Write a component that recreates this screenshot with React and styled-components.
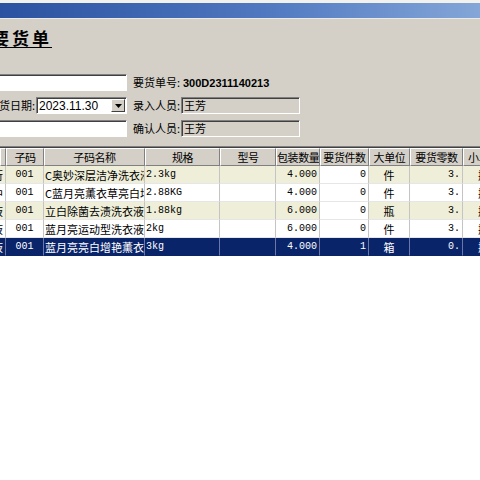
import React from 'react'
import styled, { createGlobalStyle } from 'styled-components'

const GlobalStyle = createGlobalStyle`
  html, body {
    margin: 0;
    padding: 0;
    background: #d4d0c8;
    overflow: hidden;
  }
  body {
    font-family: "Noto Sans CJK SC", "Liberation Sans", sans-serif;
  }
`

const Window = styled.div`
  width: 480px;
  height: 480px;
  display: flex;
  flex-direction: column;
  background: #d4d0c8;
  overflow: hidden;
`

const TitleBar = styled.div`
  height: 15px;
  border-top: 3px solid #f2f1ee;
  border-bottom: 1px solid #ebe9e4;
  background: linear-gradient(to right, #2a52a0, #4f78c0 55%, #84a6d8);
`

const Heading = styled.div`
  margin-top: 10px;
  width: 52px;
  height: 18px;
  display: flex;
  justify-content: flex-end;
  overflow: hidden;
  white-space: nowrap;
  font-size: 17px;
  line-height: 18px;
  font-weight: 700;
  color: #000;
  border-bottom: 1px solid #000;
`

const HeadingText = styled.span`
  flex: none;
  letter-spacing: 3px;
`

const Form = styled.div`
  margin-top: 26px;
  display: grid;
  grid-template-columns: 127px 54px 119px;
  grid-auto-rows: 17px;
  row-gap: 6px;
  align-items: center;
`

const Label = styled.div`
  font-size: 11px;
  line-height: 17px;
  padding-left: 6px;
  color: #000;
  white-space: nowrap;
  overflow: hidden;
`

const Value = styled.div`
  font-family: "Liberation Sans", sans-serif;
  font-weight: 700;
  font-size: 11px;
  margin-left: 2px;
  white-space: nowrap;
`

const Field = styled.div`
  box-sizing: border-box;
  height: 17px;
  background: ${p => (p.$readOnly ? '#d4d0c8' : '#fff')};
  border-style: solid;
  border-width: ${p => (p.$open ? '1px 1px 1px 0' : '1px')};
  border-color: #808080 #fff #fff #808080;
  box-shadow: inset 0 1px #404040, inset ${p => (p.$open ? '0' : '1px')} 0 #404040;
  font-size: 11px;
  line-height: 15px;
  padding-left: 2px;
  color: #000;
  white-space: nowrap;
  overflow: hidden;
`

const DateRow = styled.div`
  display: flex;
  align-items: center;
  gap: 1px;
`

const CutLabel = styled.div`
  width: 35px;
  display: flex;
  justify-content: flex-end;
  overflow: hidden;
  white-space: nowrap;
  font-size: 11px;
  line-height: 17px;
`

const DateBox = styled.div`
  box-sizing: border-box;
  flex: 1;
  height: 17px;
  display: flex;
  align-items: center;
  background: #fff;
  border: 1px solid;
  border-color: #808080 #fff #fff #808080;
  box-shadow: inset 1px 1px #404040;
`

const DateText = styled.div`
  flex: 1;
  padding-left: 2px;
  font-family: "Liberation Sans", sans-serif;
  font-size: 12px;
`

const DropButton = styled.div`
  width: 14px;
  height: 13px;
  margin-right: 1px;
  box-sizing: border-box;
  display: flex;
  align-items: center;
  justify-content: center;
  background: #d4d0c8;
  border: 1px solid;
  border-color: #fff #404040 #404040 #fff;
`

const Table = styled.div`
  margin-top: 9px;
  flex: 1;
  background: #fff;
  border-top: 1px solid #808080;
  box-shadow: inset 0 1px #404040;
  padding-top: 1px;
  overflow: hidden;
`

const Row = styled.div`
  display: grid;
  grid-template-columns: 6px 38px 101px 75px 56px 44px 49px 41px 53px 42px;
  height: 18px;
`

const HeadCell = styled.div`
  box-sizing: border-box;
  background: #d4d0c8;
  border-top: 1px solid #fff;
  border-left: 1px solid #fff;
  border-right: 1px solid #808080;
  border-bottom: 1px solid #808080;
  font-size: 11px;
  line-height: 16px;
  letter-spacing: -0.4px;
  text-align: center;
  white-space: nowrap;
  overflow: hidden;
  color: #000;
`

const Cell = styled.div`
  box-sizing: border-box;
  display: flex;
  align-items: center;
  justify-content: ${p => (p.$align === 'right' ? 'flex-end' : p.$align === 'center' ? 'center' : 'flex-start')};
  padding: 0 ${p => (p.$align === 'right' ? '2px' : '1px')};
  background: ${p => (p.$sel ? '#0a246a' : p.$tint ? '#efefd9' : '#fff')};
  color: ${p => (p.$sel ? '#fff' : '#000')};
  border-right: 1px solid ${p => (p.$sel ? '#6a78a8' : '#c4c4c4')};
  border-bottom: 1px solid ${p => (p.$sel ? '#0a246a' : '#e6e6e6')};
  font-family: ${p => (p.$mono ? '"Liberation Mono", "Noto Sans CJK SC", monospace' : '"Noto Sans CJK SC", sans-serif')};
  font-size: ${p => (p.$mono ? '10px' : '11px')};
  white-space: nowrap;
  overflow: hidden;
`

const heads = ['', '子码', '子码名称', '规格', '型号', '包装数量', '要货件数', '大单位', '要货零数', '小单位']

const rows = [
  ['衍', '001', 'C奥妙深层洁净洗衣液2.3kg', '2.3kg', '', '4.000', '0', '件', '3.', '瓶'],
  ['中', '001', 'C蓝月亮薰衣草亮白增艳洗衣液', '2.88KG', '', '4.000', '0', '件', '3.', '瓶'],
  ['液', '001', '立白除菌去渍洗衣液1.88kg', '1.88kg', '', '6.000', '0', '瓶', '3.', '瓶'],
  ['液', '001', '蓝月亮运动型洗衣液2kg', '2kg', '', '6.000', '0', '件', '3.', '瓶'],
  ['液', '001', '蓝月亮亮白增艳薰衣草3kg', '3kg', '', '4.000', '1', '箱', '0.', '瓶'],
]

const cols = [
  { align: 'right' },
  { align: 'center', mono: true },
  {},
  { mono: true },
  {},
  { align: 'right', mono: true },
  { align: 'right', mono: true, plain: true },
  { align: 'center' },
  { align: 'right', mono: true },
  { align: 'center' },
]

const App = () => (
  <Window>
    <GlobalStyle />
    <TitleBar />
    <Heading>
      <HeadingText>要货单</HeadingText>
    </Heading>
    <Form>
      <Field $open />
      <Label>要货单号:</Label>
      <Value>300D2311140213</Value>

      <DateRow>
        <CutLabel>要货日期:</CutLabel>
        <DateBox>
          <DateText>2023.11.30</DateText>
          <DropButton>
            <svg width="7" height="4" viewBox="0 0 7 4">
              <path d="M0 0h7L3.5 4z" fill="#000" />
            </svg>
          </DropButton>
        </DateBox>
      </DateRow>
      <Label>录入人员:</Label>
      <Field $readOnly>王芳</Field>

      <Field $open />
      <Label>确认人员:</Label>
      <Field $readOnly>王芳</Field>
    </Form>
    <Table>
      <Row>
        {heads.map((h, i) => (
          <HeadCell key={i}>{h}</HeadCell>
        ))}
      </Row>
      {rows.map((r, ri) => (
        <Row key={ri}>
          {r.map((v, ci) => (
            <Cell
              key={ci}
              $align={cols[ci].align}
              $mono={cols[ci].mono}
              $tint={ri % 2 === 0 && !cols[ci].plain}
              $sel={ri === rows.length - 1}
            >
              {v}
            </Cell>
          ))}
        </Row>
      ))}
    </Table>
  </Window>
)

export default App
